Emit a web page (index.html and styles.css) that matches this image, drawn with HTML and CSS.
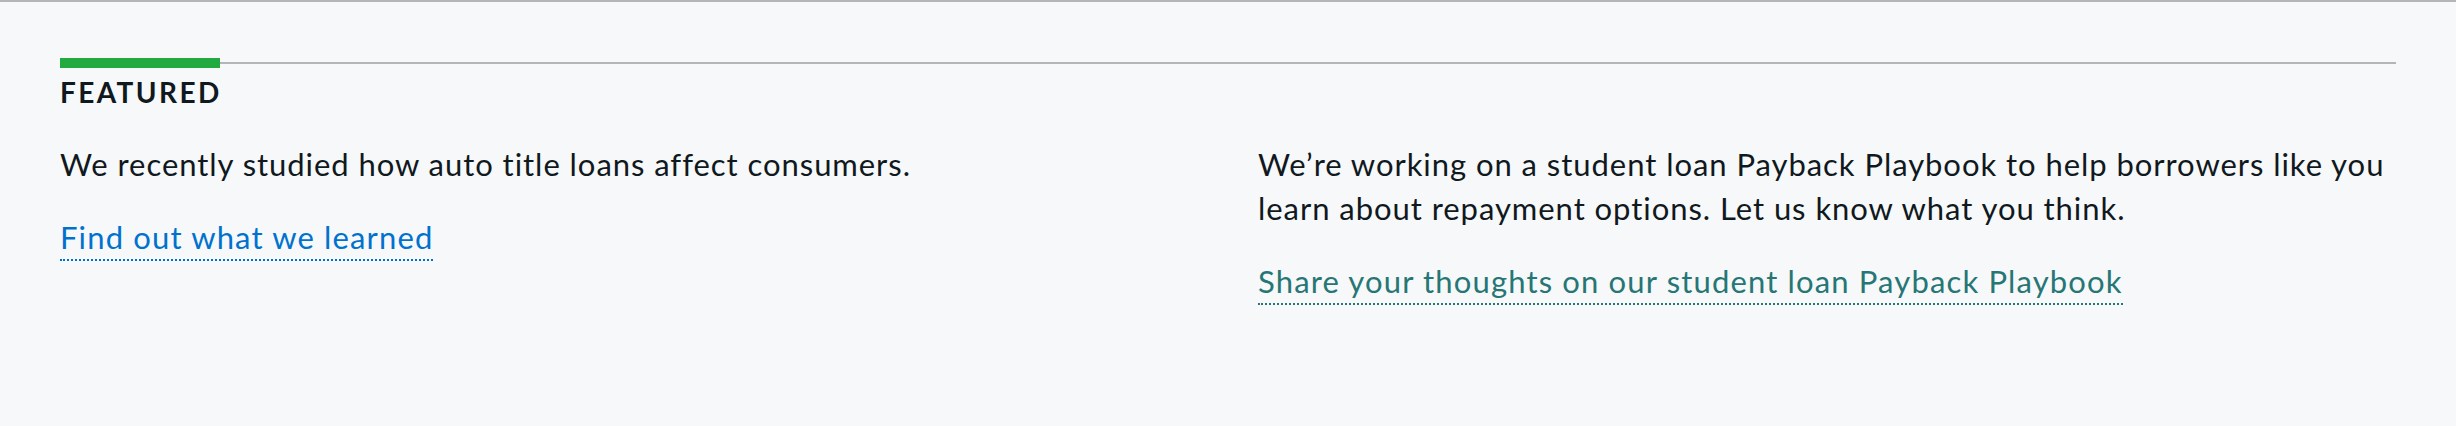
FILE: index.html
```html
<!DOCTYPE html>
<html lang="en">
<head>
<meta charset="utf-8">
<title>Featured</title>
<link rel="stylesheet" href="styles.css">
</head>
<body>
<section class="featured">
  <div class="rule"><span class="rule-accent"></span><span class="rule-line"></span></div>
  <h2 class="heading">Featured</h2>
  <div class="columns">
    <div class="item">
      <p class="text">We recently studied how auto title loans affect consumers.</p>
      <p class="action"><a class="link link-blue" href="#">Find out what we learned</a></p>
    </div>
    <div class="item">
      <p class="text">We’re working on a student loan Payback Playbook to help borrowers like you learn about repayment options. Let us know what you think.</p>
      <p class="action"><a class="link link-teal" href="#">Share your thoughts on our student loan Payback Playbook</a></p>
    </div>
  </div>
</section>
</body>
</html>
```
FILE: styles.css
```css
html, body {
  margin: 0;
  padding: 0;
  background: #f7f8fa;
}
body {
  font-family: Lato, "Open Sans", sans-serif;
  color: #101820;
}
.featured {
  border-top: 2px solid #b4b5b6;
  padding: 56px 60px 40px;
  min-height: 328px;
}
.rule {
  display: flex;
  align-items: center;
  height: 10px;
}
.rule-accent {
  width: 160px;
  height: 10px;
  background: #20aa3f;
}
.rule-line {
  flex: 1;
  height: 2px;
  background: #b4b5b6;
}
.heading {
  margin: 10px 0 0;
  font-size: 28px;
  line-height: 28px;
  font-weight: 700;
  letter-spacing: 2.4px;
  text-transform: uppercase;
  color: #101820;
}
.columns {
  display: grid;
  grid-template-columns: 1fr 1fr;
  column-gap: 60px;
  margin-top: 36px;
}
.text {
  margin: 0;
  font-size: 31px;
  line-height: 44px;
  letter-spacing: 0.95px;
}
.action {
  margin: 29px 0 0;
  font-size: 31px;
  line-height: 44px;
  letter-spacing: 1.15px;
}
.link {
  text-decoration: none;
  padding-bottom: 3px;
  border-bottom: 2px dotted currentColor;
}
.link-blue { color: #0072ce; }
.link-teal { color: #257675; }
```
